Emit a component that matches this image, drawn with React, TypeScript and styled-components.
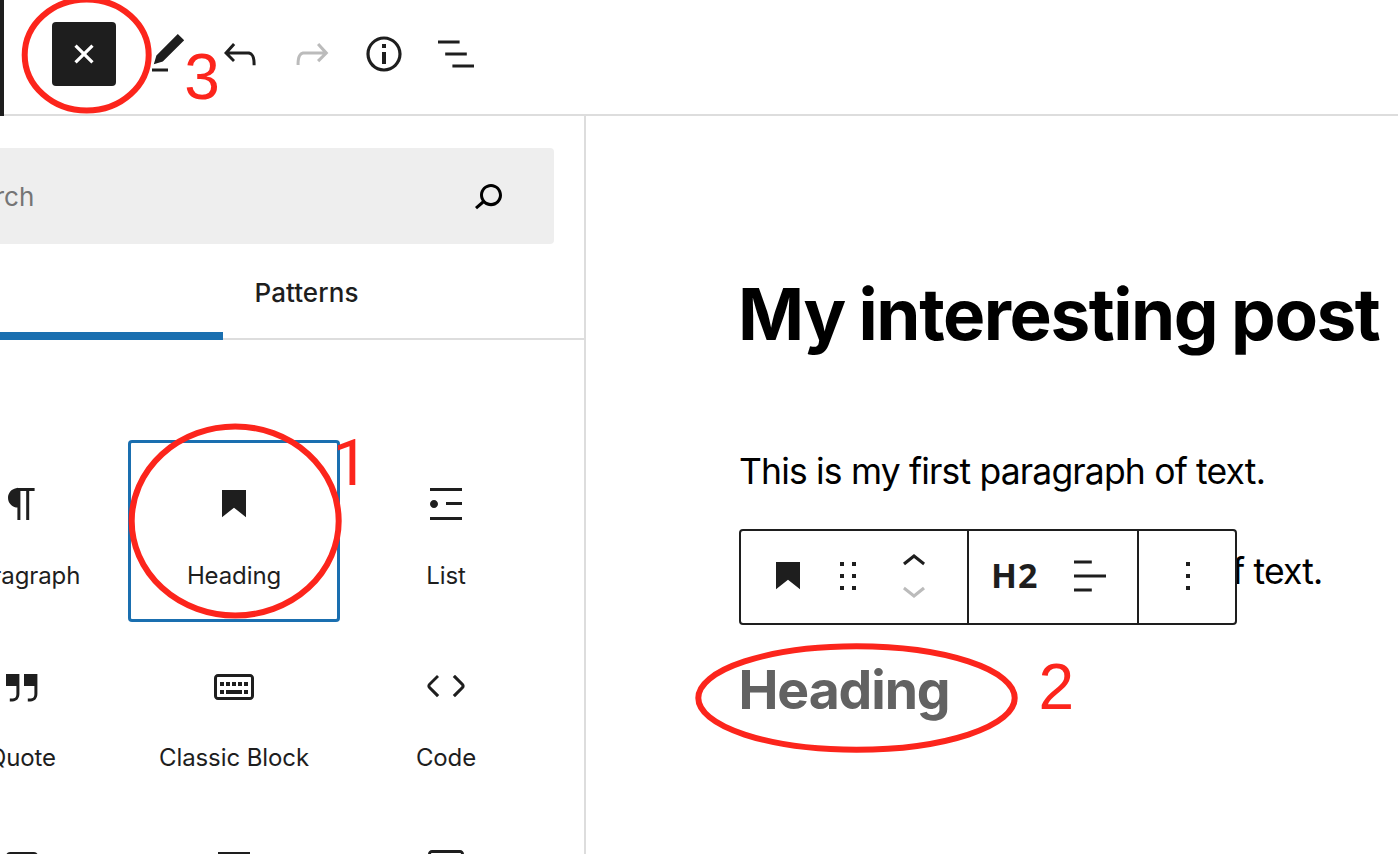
import React from 'react';
import styled, { createGlobalStyle } from 'styled-components';

const GlobalStyle = createGlobalStyle`
  * { box-sizing: border-box; }
  html, body { margin: 0; padding: 0; background: #fff; }
  body { overflow: hidden; font-family: Inter, 'Liberation Sans', sans-serif; color: #1e1e1e; }
  button { font: inherit; color: inherit; background: none; border: 0; padding: 0; margin: 0; }
  h1, h2, p { margin: 0; }
`;

const paths = {
  plus: 'M18 11.2h-5.2V6h-1.6v5.2H6v1.6h5.2V18h1.6v-5.2H18z',
  edit: 'M20.1 5.1L16.9 2 6.2 12.7l-1.3 4.4 4.5-1.3L20.1 5.1zM4 20.8h8v-1.5H4v1.5z',
  undo: 'M18.3 11.7c-.6-.6-1.4-.9-2.3-.9H6.7l2.9-3.3-1.1-1-4.5 5L8.5 16l1-1-2.7-2.7H16c.5 0 .9.2 1.3.5 1 1 1 3.4 1 4.5v.3h1.5v-.2c0-1.5 0-4.3-1.5-5.7z',
  redo: 'M15.6 6.5l-1.1 1 2.9 3.3H8c-.9 0-1.7.3-2.3.9-1.4 1.5-1.4 4.2-1.4 5.6v.2h1.5v-.3c0-1.1 0-3.5 1-4.5.3-.3.7-.5 1.3-.5h9.2L14.5 15l1.1 1.1 4.6-4.6-4.6-5z',
  info: 'M12 3.2c-4.8 0-8.8 3.9-8.8 8.8 0 4.8 3.9 8.8 8.8 8.8 4.8 0 8.8-3.9 8.8-8.8 0-4.8-4-8.8-8.8-8.8zm0 16c-4 0-7.2-3.3-7.2-7.2C4.8 8 8 4.8 12 4.8s7.2 3.3 7.2 7.2c0 4-3.2 7.2-7.2 7.2zM11 17h2v-6h-2v6zm0-8h2V7h-2v2z',
  outline: 'M13.8 5.2H3v1.5h10.8V5.2zm-3.6 12v1.5H21v-1.5H10.2zm7.2-6H6.6v1.5h10.8v-1.5z',
  search: 'M13.5 6C10.5 6 8 8.5 8 11.5c0 1.1.3 2.1.9 3l-3.4 3 1 1.1 3.4-2.9c1 .9 2.2 1.4 3.6 1.4 3 0 5.5-2.5 5.5-5.5C19 8.5 16.5 6 13.5 6zm0 9.5c-2.2 0-4-1.8-4-4s1.8-4 4-4 4 1.8 4 4-1.8 4-4 4z',
  paragraph: 'M18.3 4H9.9v-.1l-.9.2c-2.3.4-4 2.4-4 4.8s1.7 4.4 4 4.8l.7.1V20h1.5V5.5h2.9V20h1.5V5.5h2.7V4z',
  heading: 'M6 5V18.5911L12 13.8473L18 18.5911V5H6Z',
  list: 'M4 4v1.5h16V4H4zm8 8.5h8V11h-8v1.5zM4 20h16v-1.5H4V20zm4-8c0-1.1-.9-2-2-2s-2 .9-2 2 .9 2 2 2 2-.9 2-2z',
  quote: 'M13 6v6h5.2v4c0 .8-.2 1.4-.5 1.7-.6.6-1.6.6-2.5.5h-.3v1.5h.5c1 0 2.3-.1 3.3-1 .6-.6 1-1.6 1-2.8V6H13zm-9 6h5.2v4c0 .8-.2 1.4-.5 1.7-.6.6-1.6.6-2.5.5h-.3v1.5h.5c1 0 2.3-.1 3.3-1 .6-.6 1-1.6 1-2.8V6H4v6z',
  classic: 'M20 6H4c-1.1 0-2 .9-2 2v9c0 1.1.9 2 2 2h16c1.1 0 2-.9 2-2V8c0-1.1-.9-2-2-2zm.5 11c0 .3-.2.5-.5.5H4c-.3 0-.5-.2-.5-.5V8c0-.3.2-.5.5-.5h16c.3 0 .5.2.5.5v9zM10 10H8v2h2v-2zm-5 2h2v-2H5v2zm8-2h-2v2h2v-2zm-5 6h8v-2H8v2zm6-4h2v-2h-2v2zm3 0h2v-2h-2v2zm0 4h2v-2h-2v2zM5 16h2v-2H5v2z',
  code: 'M20.8 10.7l-4.3-4.3-1.1 1.1 4.3 4.3c.1.1.1.3 0 .4l-4.3 4.3 1.1 1.1 4.3-4.3c.7-.8.7-1.9 0-2.6zM4.2 11.8l4.3-4.3-1-1-4.3 4.3c-.7.7-.7 1.8 0 2.5l4.3 4.3 1.1-1.1-4.3-4.3c-.2-.1-.2-.3-.1-.4z',
  preformatted: 'M18 4H6c-1.1 0-2 .9-2 2v12c0 1.1.9 2 2 2h12c1.1 0 2-.9 2-2V6c0-1.1-.9-2-2-2zm.5 14c0 .3-.2.5-.5.5H6c-.3 0-.5-.2-.5-.5V6c0-.3.2-.5.5-.5h12c.3 0 .5.2.5.5v12z',
  pullquote: 'M4 4h16v1.5H4zM4 18.5h16V20H4zM6 8h12v8H6z',
  table: 'M19 3H5c-1.1 0-2 .9-2 2v14c0 1.1.9 2 2 2h14c1.1 0 2-.9 2-2V5c0-1.1-.9-2-2-2zm.5 16c0 .3-.2.5-.5.5H5c-.3 0-.5-.2-.5-.5V5c0-.3.2-.5.5-.5h14c.3 0 .5.2.5.5v14z',
  drag: 'M8 7h2V5H8v2zm0 6h2v-2H8v2zm0 6h2v-2H8v2zm6-14v2h2V5h-2zm0 8h2v-2h-2v2zm0 6h2v-2h-2v2z',
  up: 'M6.5 12.4L12 8l5.5 4.4-.9 1.2L12 10l-4.5 3.6-1-1.2z',
  down: 'M17.5 11.6L12 16l-5.5-4.4.9-1.2L12 14l4.5-3.6 1 1.2z',
  align: 'M4 19.8h8.9v-1.5H4v1.5zm8.9-15.6H4v1.5h8.9V4.2zm-8.9 7v1.5h16v-1.5H4z',
  more: 'M13 19h-2v-2h2v2zm0-6h-2v-2h2v2zm0-6h-2V5h2v2z',
};

type IconName = keyof typeof paths;

const Glyph = styled.svg<{ $turned?: boolean }>`
  display: block;
  flex: none;
  width: 48px;
  height: 48px;
  fill: currentColor;
  transform: ${(p) => (p.$turned ? 'rotate(45deg)' : 'none')};
`;

const Icon = ({ name, turned }: { name: IconName; turned?: boolean }) => (
  <Glyph viewBox="0 0 24 24" $turned={turned} aria-hidden="true">
    <path d={paths[name]} />
  </Glyph>
);

const Page = styled.div`
  position: relative;
  display: flex;
  flex-direction: column;
  width: 1398px;
  height: 854px;
  overflow: hidden;
  background: #fff;
`;

const Header = styled.header`
  display: flex;
  flex: none;
  height: 116px;
`;

const AdminEdge = styled.div`
  flex: none;
  width: 4px;
  background: #1e1e1e;
`;

const Tools = styled.div`
  display: flex;
  flex: 1;
  align-items: center;
  padding: 0 0 6px 48px;
  border-bottom: 2px solid #ddd;
`;

const InserterToggle = styled.button`
  display: flex;
  align-items: center;
  justify-content: center;
  width: 64px;
  height: 64px;
  margin-right: 16px;
  border-radius: 4px;
  background: #1e1e1e;
  color: #fff;
`;

const ToolButton = styled.button<{ $disabled?: boolean }>`
  display: flex;
  align-items: center;
  justify-content: center;
  width: 72px;
  height: 72px;
  color: ${(p) => (p.$disabled ? '#bbb' : '#1e1e1e')};
`;

const Body = styled.div`
  display: flex;
  flex: 1;
  min-height: 0;
`;

const Sidebar = styled.aside`
  flex: none;
  width: 702px;
  margin-left: -116px;
  border-right: 2px solid #ddd;
`;

const SearchBox = styled.div`
  display: flex;
  align-items: center;
  justify-content: space-between;
  height: 96px;
  margin: 32px 30px 0 32px;
  padding: 0 42px 0 32px;
  border-radius: 4px;
  background: #eee;
  color: #000;
`;

const Placeholder = styled.span`
  font-size: 26px;
  letter-spacing: 0;
  color: #757575;
`;

const TabRow = styled.div`
  display: flex;
  height: 96px;
  box-shadow: inset 0 -2px 0 #ddd;
`;

const Tab = styled.button<{ $width: number; $active?: boolean }>`
  display: flex;
  align-items: center;
  justify-content: center;
  width: ${(p) => p.$width}px;
  font-size: 26px;
  font-weight: 500;
  letter-spacing: 0.08px;
  box-shadow: ${(p) => (p.$active ? 'inset 0 -8px 0 #1a6fb0' : 'none')};
`;

const BlockGrid = styled.div`
  display: grid;
  grid-template-columns: repeat(3, 212px);
  grid-auto-rows: 182px;
  padding: 100px 0 0 32px;
`;

const BlockItem = styled.button<{ $selected?: boolean }>`
  display: flex;
  flex-direction: column;
  align-items: center;
  gap: 32px;
  padding-top: 40px;
  border-radius: 4px;
  box-shadow: ${(p) => (p.$selected ? 'inset 0 0 0 3px #1a6fb0' : 'none')};
`;

const BlockLabel = styled.span`
  font-size: 24px;
  line-height: 32px;
  letter-spacing: -0.1px;
  white-space: nowrap;
`;

const Canvas = styled.main`
  flex: 1;
  min-width: 0;
  padding: 155px 0 0 154px;
  color: #000;
  white-space: nowrap;
`;

const Title = styled.h1`
  height: 90px;
  margin-left: -2px;
  font-size: 71px;
  line-height: 86px;
  font-weight: 700;
  letter-spacing: -1.45px;
  word-spacing: -1.5px;
`;

const BlockStack = styled.div`
  position: relative;
  padding-top: 81px;
`;

const Paragraph = styled.p`
  height: 60px;
  margin: 0 0 40px -1px;
  font-size: 35.5px;
  line-height: 60px;
  letter-spacing: -0.83px;
`;

const HeadingBlock = styled.h2`
  margin-left: -1.5px;
  padding-top: 8px;
  font-size: 53.5px;
  line-height: 80px;
  font-weight: 700;
  letter-spacing: -1.1px;
  color: #626262;
`;

const BlockToolbar = styled.div`
  position: absolute;
  left: -1px;
  top: 168px;
  display: flex;
  width: 498px;
  height: 96px;
  border: 2px solid #1e1e1e;
  border-radius: 4px;
  background: #fff;
  color: #1e1e1e;
`;

const ToolGroup = styled.div<{ $width: number; $start: number; $gap?: number }>`
  display: flex;
  align-items: center;
  flex: none;
  gap: ${(p) => p.$gap ?? 0}px;
  width: ${(p) => p.$width}px;
  padding: 0 0 2px ${(p) => p.$start}px;
  & + & { border-left: 2px solid #1e1e1e; }
`;

const Movers = styled.div`
  display: flex;
  flex-direction: column;
  margin-left: 6px;
`;

const Mover = styled.button<{ $disabled?: boolean; $dir: 'up' | 'down' }>`
  display: flex;
  height: 38px;
  align-items: ${(p) => (p.$dir === 'up' ? 'flex-start' : 'flex-end')};
  color: ${(p) => (p.$disabled ? '#bbb' : 'inherit')};
`;

const Level = styled.span`
  width: 48px;
  padding-bottom: 2px;
  font-family: 'Open Sans', 'Noto Sans', sans-serif;
  font-size: 34px;
  line-height: 46px;
  font-weight: 750;
  letter-spacing: 1px;
`;

const Markup = styled.div`
  position: absolute;
  inset: 0;
  pointer-events: none;
  color: #fc251c;
`;

const Rings = styled.svg`
  display: block;
  width: 100%;
  height: 100%;
  fill: none;
  stroke: currentColor;
  stroke-width: 6px;
`;

const Step = styled.span<{ $x: number; $y: number; $plain?: boolean }>`
  position: absolute;
  left: ${(p) => p.$x}px;
  top: ${(p) => p.$y}px;
  font-family: ${(p) => (p.$plain ? 'Roboto' : "'Liberation Sans'")}, Arial, sans-serif;
  font-size: 64px;
  line-height: 64px;
`;

const blocks: { icon: IconName; label: string; selected?: boolean }[] = [
  { icon: 'paragraph', label: 'Paragraph' },
  { icon: 'heading', label: 'Heading', selected: true },
  { icon: 'list', label: 'List' },
  { icon: 'quote', label: 'Quote' },
  { icon: 'classic', label: 'Classic Block' },
  { icon: 'code', label: 'Code' },
  { icon: 'preformatted', label: '' },
  { icon: 'pullquote', label: '' },
  { icon: 'table', label: '' },
];

export default function App() {
  return (
    <Page>
      <GlobalStyle />
      <Header>
        <AdminEdge />
        <Tools>
          <InserterToggle><Icon name="plus" turned /></InserterToggle>
          <ToolButton><Icon name="edit" /></ToolButton>
          <ToolButton><Icon name="undo" /></ToolButton>
          <ToolButton $disabled><Icon name="redo" /></ToolButton>
          <ToolButton><Icon name="info" /></ToolButton>
          <ToolButton><Icon name="outline" /></ToolButton>
        </Tools>
      </Header>
      <Body>
        <Sidebar>
          <SearchBox>
            <Placeholder>Search</Placeholder>
            <Icon name="search" />
          </SearchBox>
          <TabRow>
            <Tab $width={339} $active />
            <Tab $width={167}>Patterns</Tab>
          </TabRow>
          <BlockGrid>
            {blocks.map((b) => (
              <BlockItem key={b.icon} $selected={b.selected}>
                <Icon name={b.icon} />
                <BlockLabel>{b.label}</BlockLabel>
              </BlockItem>
            ))}
          </BlockGrid>
        </Sidebar>
        <Canvas>
          <Title>My interesting post</Title>
          <BlockStack>
            <Paragraph>This is my first paragraph of text.</Paragraph>
            <Paragraph>This is my second paragraph of text.</Paragraph>
            <HeadingBlock>Heading</HeadingBlock>
            <BlockToolbar>
              <ToolGroup $width={226} $start={23} $gap={12}>
                <Icon name="heading" />
                <Icon name="drag" />
                <Movers>
                  <Mover $dir="up"><Icon name="up" /></Mover>
                  <Mover $dir="down" $disabled><Icon name="down" /></Mover>
                </Movers>
              </ToolGroup>
              <ToolGroup $width={170} $start={22} $gap={27}>
                <Level>H2</Level>
                <Icon name="align" />
              </ToolGroup>
              <ToolGroup $width={98} $start={25}>
                <Icon name="more" />
              </ToolGroup>
            </BlockToolbar>
          </BlockStack>
        </Canvas>
      </Body>
      <Markup>
        <Rings viewBox="0 0 1398 854">
          <ellipse cx="235.2" cy="521" rx="103.5" ry="94.5" />
          <ellipse cx="856.5" cy="698" rx="158.2" ry="51.7" />
          <ellipse cx="86.7" cy="55" rx="62" ry="55.6" />
        </Rings>
        <Step $x={332.5} $y={432} $plain>1</Step>
        <Step $x={1038.5} $y={655}>2</Step>
        <Step $x={184.2} $y={45}>3</Step>
      </Markup>
    </Page>
  );
}
